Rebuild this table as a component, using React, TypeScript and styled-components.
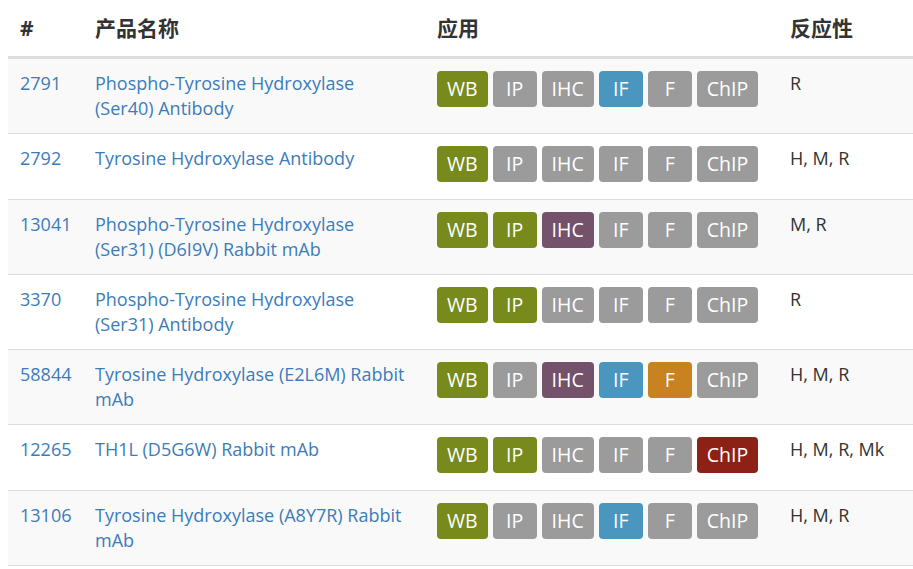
import React from "react";
import styled, { createGlobalStyle } from "styled-components";

const Global = createGlobalStyle`
  html, body { margin: 0; padding: 0; background: #fff; }
  body { margin: 0 0 0 8px; font-family: "Open Sans", "Noto Sans CJK SC", sans-serif; color: #333; }
`;

type Tone = "green" | "grey" | "blue" | "purple" | "orange" | "red";

const toneColor: Record<Tone, string> = {
  green: "#778a1b",
  grey: "#9b9b9b",
  blue: "#4b96bf",
  purple: "#74526b",
  orange: "#c8821f",
  red: "#8e2115",
};

const Table = styled.table`
  width: 905px;
  table-layout: fixed;
  border-collapse: collapse;
  border-spacing: 0;
`;

const HeadCell = styled.th`
  text-align: left;
  font-family: "Open Sans", "Noto Sans CJK SC", sans-serif;
  font-weight: 700;
  font-size: 21px;
  line-height: 28px;
  color: #333;
  padding: 14px 12px 14px 12px;
  border-bottom: 3px solid #dddddd;
  vertical-align: bottom;
`;

const Row = styled.tr<{ $striped: boolean }>`
  background: ${(p) => (p.$striped ? "#f9f9f9" : "#ffffff")};
  border-bottom: 1px solid #dddddd;
`;

const Cell = styled.td`
  padding: 12px 12px;
  vertical-align: top;
  font-size: 18px;
  line-height: 25px;
  color: #333;
`;

const Link = styled.a`
  color: #3c7cb9;
  text-decoration: none;
`;

const Badges = styled.div`
  display: flex;
  gap: 5px;
  padding-bottom: 5px;
`;

const Badge = styled.span<{ $tone: Tone }>`
  display: inline-flex;
  align-items: center;
  justify-content: center;
  box-sizing: border-box;
  min-width: 44px;
  height: 36px;
  padding: 0 10px;
  border-radius: 4px;
  background: ${(p) => toneColor[p.$tone]};
  color: #fff;
  font-size: 19.5px;
  line-height: 1;
`;

const APPS = ["WB", "IP", "IHC", "IF", "F", "ChIP"] as const;
const ON: Record<string, Tone> = {
  WB: "green",
  IP: "green",
  IHC: "purple",
  IF: "blue",
  F: "orange",
  ChIP: "red",
};

type Product = { id: string; name: string; apps: string[]; react: string };

const products: Product[] = [
  { id: "2791", name: "Phospho-Tyrosine Hydroxylase (Ser40) Antibody", apps: ["WB", "IF"], react: "R" },
  { id: "2792", name: "Tyrosine Hydroxylase Antibody", apps: ["WB"], react: "H, M, R" },
  { id: "13041", name: "Phospho-Tyrosine Hydroxylase (Ser31) (D6I9V) Rabbit mAb", apps: ["WB", "IP", "IHC"], react: "M, R" },
  { id: "3370", name: "Phospho-Tyrosine Hydroxylase (Ser31) Antibody", apps: ["WB", "IP"], react: "R" },
  { id: "58844", name: "Tyrosine Hydroxylase (E2L6M) Rabbit mAb", apps: ["WB", "IHC", "IF", "F"], react: "H, M, R" },
  { id: "12265", name: "TH1L (D5G6W) Rabbit mAb", apps: ["WB", "IP", "ChIP"], react: "H, M, R, Mk" },
  { id: "13106", name: "Tyrosine Hydroxylase (A8Y7R) Rabbit mAb", apps: ["WB", "IF"], react: "H, M, R" },
];

export default function App() {
  return (
    <>
      <Global />
      <Table>
        <colgroup>
          <col style={{ width: 75 }} />
          <col style={{ width: 342 }} />
          <col style={{ width: 353 }} />
          <col />
        </colgroup>
        <thead>
          <tr>
            <HeadCell>#</HeadCell>
            <HeadCell>产品名称</HeadCell>
            <HeadCell>应用</HeadCell>
            <HeadCell>反应性</HeadCell>
          </tr>
        </thead>
        <tbody>
          {products.map((p, i) => (
            <Row key={p.id} $striped={i % 2 === 0}>
              <Cell>
                <Link href="#">{p.id}</Link>
              </Cell>
              <Cell>
                <Link href="#">{p.name}</Link>
              </Cell>
              <Cell>
                <Badges>
                  {APPS.map((a) => (
                    <Badge key={a} $tone={p.apps.includes(a) ? ON[a] : "grey"}>
                      {a}
                    </Badge>
                  ))}
                </Badges>
              </Cell>
              <Cell>{p.react}</Cell>
            </Row>
          ))}
        </tbody>
      </Table>
    </>
  );
}
